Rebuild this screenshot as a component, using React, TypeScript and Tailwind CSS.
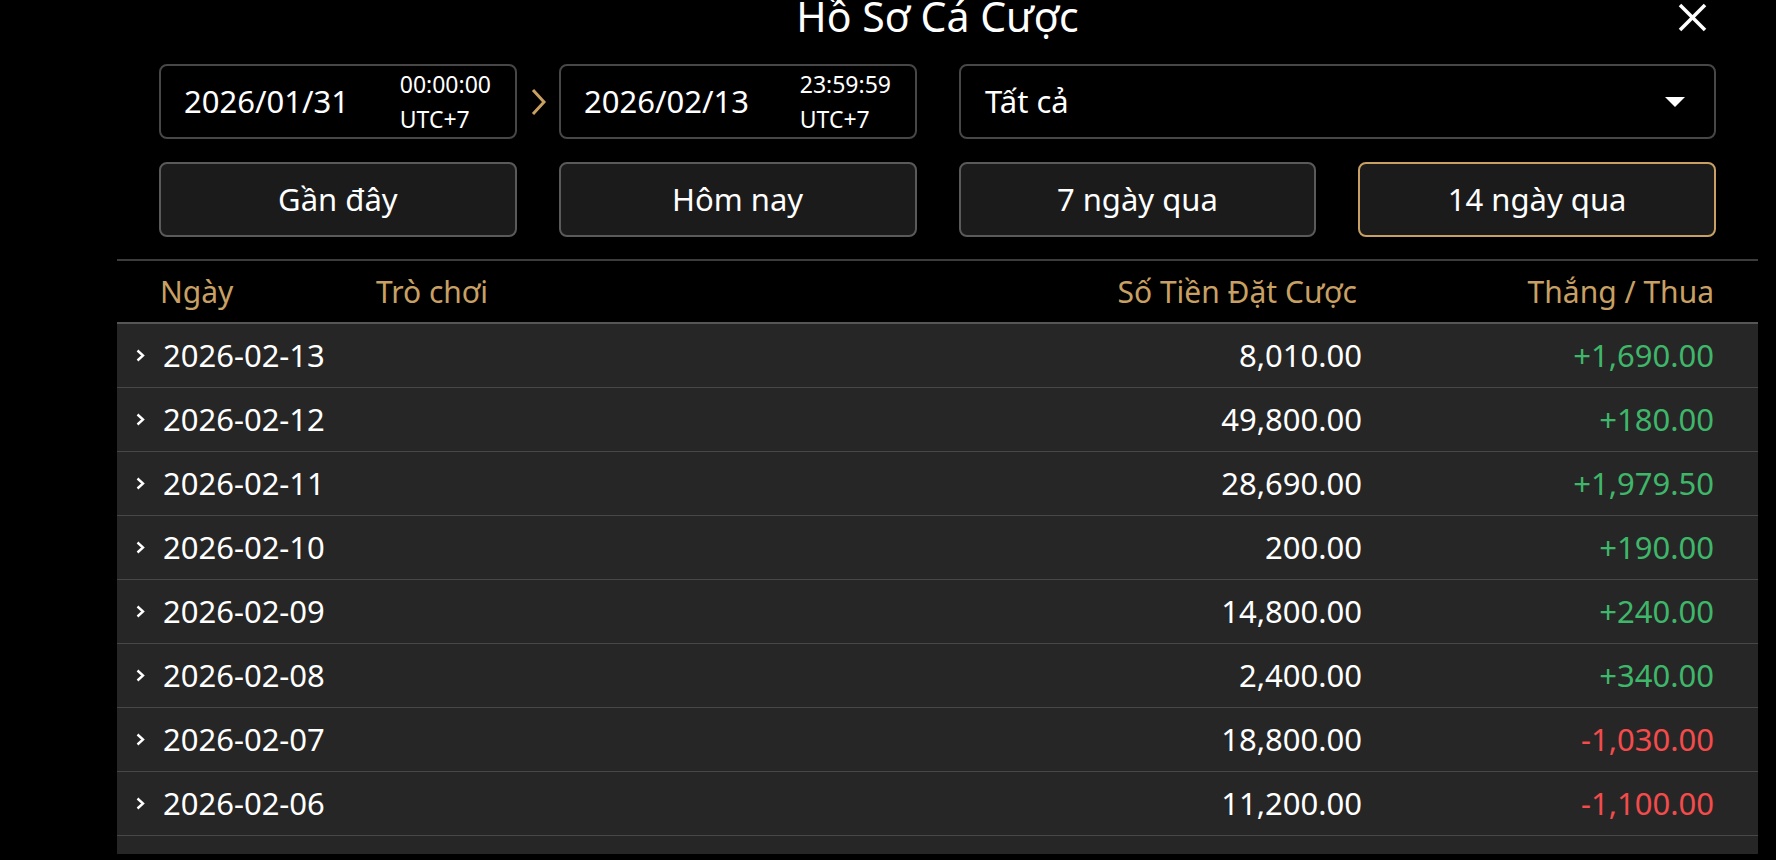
import React from "react";

const rows = [
  { d: "2026-02-13", a: "8,010.00", w: "+1,690.00", win: true },
  { d: "2026-02-12", a: "49,800.00", w: "+180.00", win: true },
  { d: "2026-02-11", a: "28,690.00", w: "+1,979.50", win: true },
  { d: "2026-02-10", a: "200.00", w: "+190.00", win: true },
  { d: "2026-02-09", a: "14,800.00", w: "+240.00", win: true },
  { d: "2026-02-08", a: "2,400.00", w: "+340.00", win: true },
  { d: "2026-02-07", a: "18,800.00", w: "-1,030.00", win: false },
  { d: "2026-02-06", a: "11,200.00", w: "-1,100.00", win: false },
];

function DateBox({ date, time }: { date: string; time: string }) {
  return (
    <div className="w-[358px] h-[75px] rounded-lg border-2 border-[#474747] bg-black flex items-center justify-between pl-[23px] pr-[24px]">
      <span className="text-[31px] leading-none">{date}</span>
      <div className="flex flex-col text-[23px] leading-[35px]">
        <span>{time}</span>
        <span>UTC+7</span>
      </div>
    </div>
  );
}

function QuickBtn({ label, active }: { label: string; active?: boolean }) {
  return (
    <div
      className={
        active
          ? "h-[75px] rounded-lg border-2 border-[#c9a063] bg-[#1b1b1b] flex items-center justify-center text-[31px] leading-none"
          : "h-[75px] rounded-lg border-2 border-[#5a5a5a] bg-[#1b1b1b] flex items-center justify-center text-[31px] leading-none"
      }
    >
      {label}
    </div>
  );
}

export default function App() {
  return (
    <div className="h-[860px] w-full bg-black overflow-hidden font-['Noto_Sans',sans-serif] text-white">
      <div className="ml-[117px] w-[1641px] h-full flex flex-col pb-[6px]">
        <div className="relative h-[64px] flex justify-center shrink-0">
          <h1 className="text-[41px] leading-[41px] -mt-[4px] font-normal">Hồ Sơ Cá Cược</h1>
          <button className="absolute right-[51px] top-[3px] w-[29px] h-[29px]">
            <svg width="29" height="29" viewBox="0 0 29 29">
              <line x1="2" y1="2" x2="27" y2="27" stroke="white" strokeWidth="3.5" />
              <line x1="27" y1="2" x2="2" y2="27" stroke="white" strokeWidth="3.5" />
            </svg>
          </button>
        </div>

        <div className="px-[42px] shrink-0">
          <div className="flex">
            <DateBox date="2026/01/31" time="00:00:00" />
            <div className="w-[42px] flex items-center justify-center">
              <svg width="17" height="28" viewBox="0 0 17 28">
                <polyline points="3,2 14,14 3,26" fill="none" stroke="#c9a063" strokeWidth="3" />
              </svg>
            </div>
            <DateBox date="2026/02/13" time="23:59:59" />
            <div className="ml-[42px] flex-1 h-[75px] rounded-lg border-2 border-[#474747] bg-black flex items-center justify-between pl-[24px] pr-[29px]">
              <span className="text-[31px] leading-none">Tất cả</span>
              <svg width="20" height="10" viewBox="0 0 20 10">
                <polygon points="0,0 20,0 10,10" fill="white" />
              </svg>
            </div>
          </div>
          <div className="grid grid-cols-4 gap-x-[42px] mt-[23px]">
            <QuickBtn label="Gần đây" />
            <QuickBtn label="Hôm nay" />
            <QuickBtn label="7 ngày qua" />
            <QuickBtn label="14 ngày qua" active />
          </div>
        </div>

        <div className="mt-[22px] shrink-0 border-t-2 border-[#3c3c3c] border-b-2 border-b-[#565656] h-[65px] flex items-center pl-[43px] pr-[44px] text-[30px] leading-none text-[#c9a063]">
          <span className="w-[216px]">Ngày</span>
          <span>Trò chơi</span>
          <span className="flex-1 text-right pr-[5px]">Số Tiền Đặt Cược</span>
          <span className="w-[352px] text-right">Thắng / Thua</span>
        </div>

        <div className="flex-1 min-h-0 overflow-hidden bg-[#262626]">
          {rows.map((r) => (
            <div
              key={r.d}
              className="h-[64px] border-b border-[#474747] flex items-center pl-[19px] pr-[44px] text-[31px] leading-none"
            >
              <svg width="9" height="13" viewBox="0 0 9 13" className="shrink-0">
                <polyline points="1.5,1.5 7,6.5 1.5,11.5" fill="none" stroke="white" strokeWidth="2.4" />
              </svg>
              <span className="ml-[18px]">{r.d}</span>
              <span className="flex-1 text-right">{r.a}</span>
              <span className={r.win ? "w-[352px] text-right text-[#3fb76a]" : "w-[352px] text-right text-[#f44b4b]"}>
                {r.w}
              </span>
            </div>
          ))}
          <div className="h-[64px] border-b border-[#474747]" />
        </div>
      </div>
    </div>
  );
}
